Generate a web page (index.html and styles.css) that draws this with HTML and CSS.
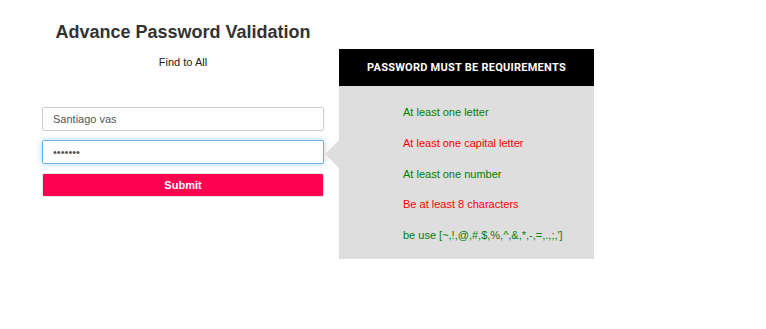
FILE: index.html
```html
<!DOCTYPE html>
<html lang="en">
<head>
    <meta charset="UTF-8">
    <title>Advance Password Validation</title>
    <link rel="stylesheet" href="styles.css">
</head>
<body>
    <div class="wrapper">
        <div class="form-box">
            <h1>Advance Password Validation</h1>
            <p class="subtitle">Find to All</p>
            <form>
                <input type="text" value="Santiago vas">
                <input type="password" class="focused" value="1234567">
                <button type="button">Submit</button>
            </form>
        </div>

        <div class="rules">
            <div class="rules-head">PASSWORD MUST BE REQUIREMENTS</div>
            <ul>
                <li class="ok">At least one letter</li>
                <li class="bad">At least one capital letter</li>
                <li class="ok">At least one number</li>
                <li class="bad">Be at least 8 characters</li>
                <li class="ok">be use [~,!,@,#,$,%,^,&amp;,*,-,=,.,;,']</li>
            </ul>
        </div>
    </div>
</body>
</html>
```

FILE: styles.css
```css
body {
    margin: 0;
    font-family: "Liberation Sans", Arial, sans-serif;
    background: #fff;
    color: #333;
}
.wrapper {
    display: flex;
    align-items: flex-start;
    padding-left: 42px;
}
.form-box {
    width: 282px;
}
h1 {
    margin: 21px 0 0;
    font-size: 18px;
    line-height: 22px;
    text-align: center;
    color: #333;
}
.subtitle {
    margin: 13px 0 0;
    font-size: 11px;
    line-height: 13px;
    text-align: center;
    color: #222;
}
form {
    display: flex;
    flex-direction: column;
    margin-top: 38px;
}
input {
    height: 24px;
    box-sizing: border-box;
    padding: 0 10px;
    margin-bottom: 9px;
    border: 1px solid #ccc;
    border-radius: 2px;
    font-family: inherit;
    font-size: 11px;
    color: #555;
    outline: none;
}
input.focused {
    border-color: #66afe9;
    box-shadow: 0 0 6px rgba(102, 175, 233, 0.5);
}
button {
    height: 24px;
    border: 1px solid #e6e6e6;
    border-radius: 2px;
    background: #ff0050;
    color: #fff;
    font-family: inherit;
    font-size: 11px;
    font-weight: bold;
    cursor: pointer;
}
.rules {
    position: relative;
    width: 255px;
    margin-top: 49px;
    margin-left: 15px;
    background: #dedede;
    padding-bottom: 16px;
}
.rules::before {
    content: "";
    position: absolute;
    left: -14px;
    top: 91px;
    border-top: 14px solid transparent;
    border-bottom: 14px solid transparent;
    border-right: 14px solid #dedede;
}
.rules-head {
    height: 37px;
    line-height: 37px;
    background: #000;
    color: #fff;
    font-family: Roboto, "Liberation Sans", sans-serif;
    font-size: 11px;
    font-weight: bold;
    letter-spacing: 0.25px;
    text-align: center;
}
ul {
    list-style: none;
    margin: 0;
    padding: 18px 0 0 64px;
}
li {
    font-size: 11px;
    line-height: 16px;
    margin-bottom: 14.75px;
}
li:last-child {
    margin-bottom: 0;
}
.ok {
    color: #008000;
}
.bad {
    color: #ff0000;
}
```
